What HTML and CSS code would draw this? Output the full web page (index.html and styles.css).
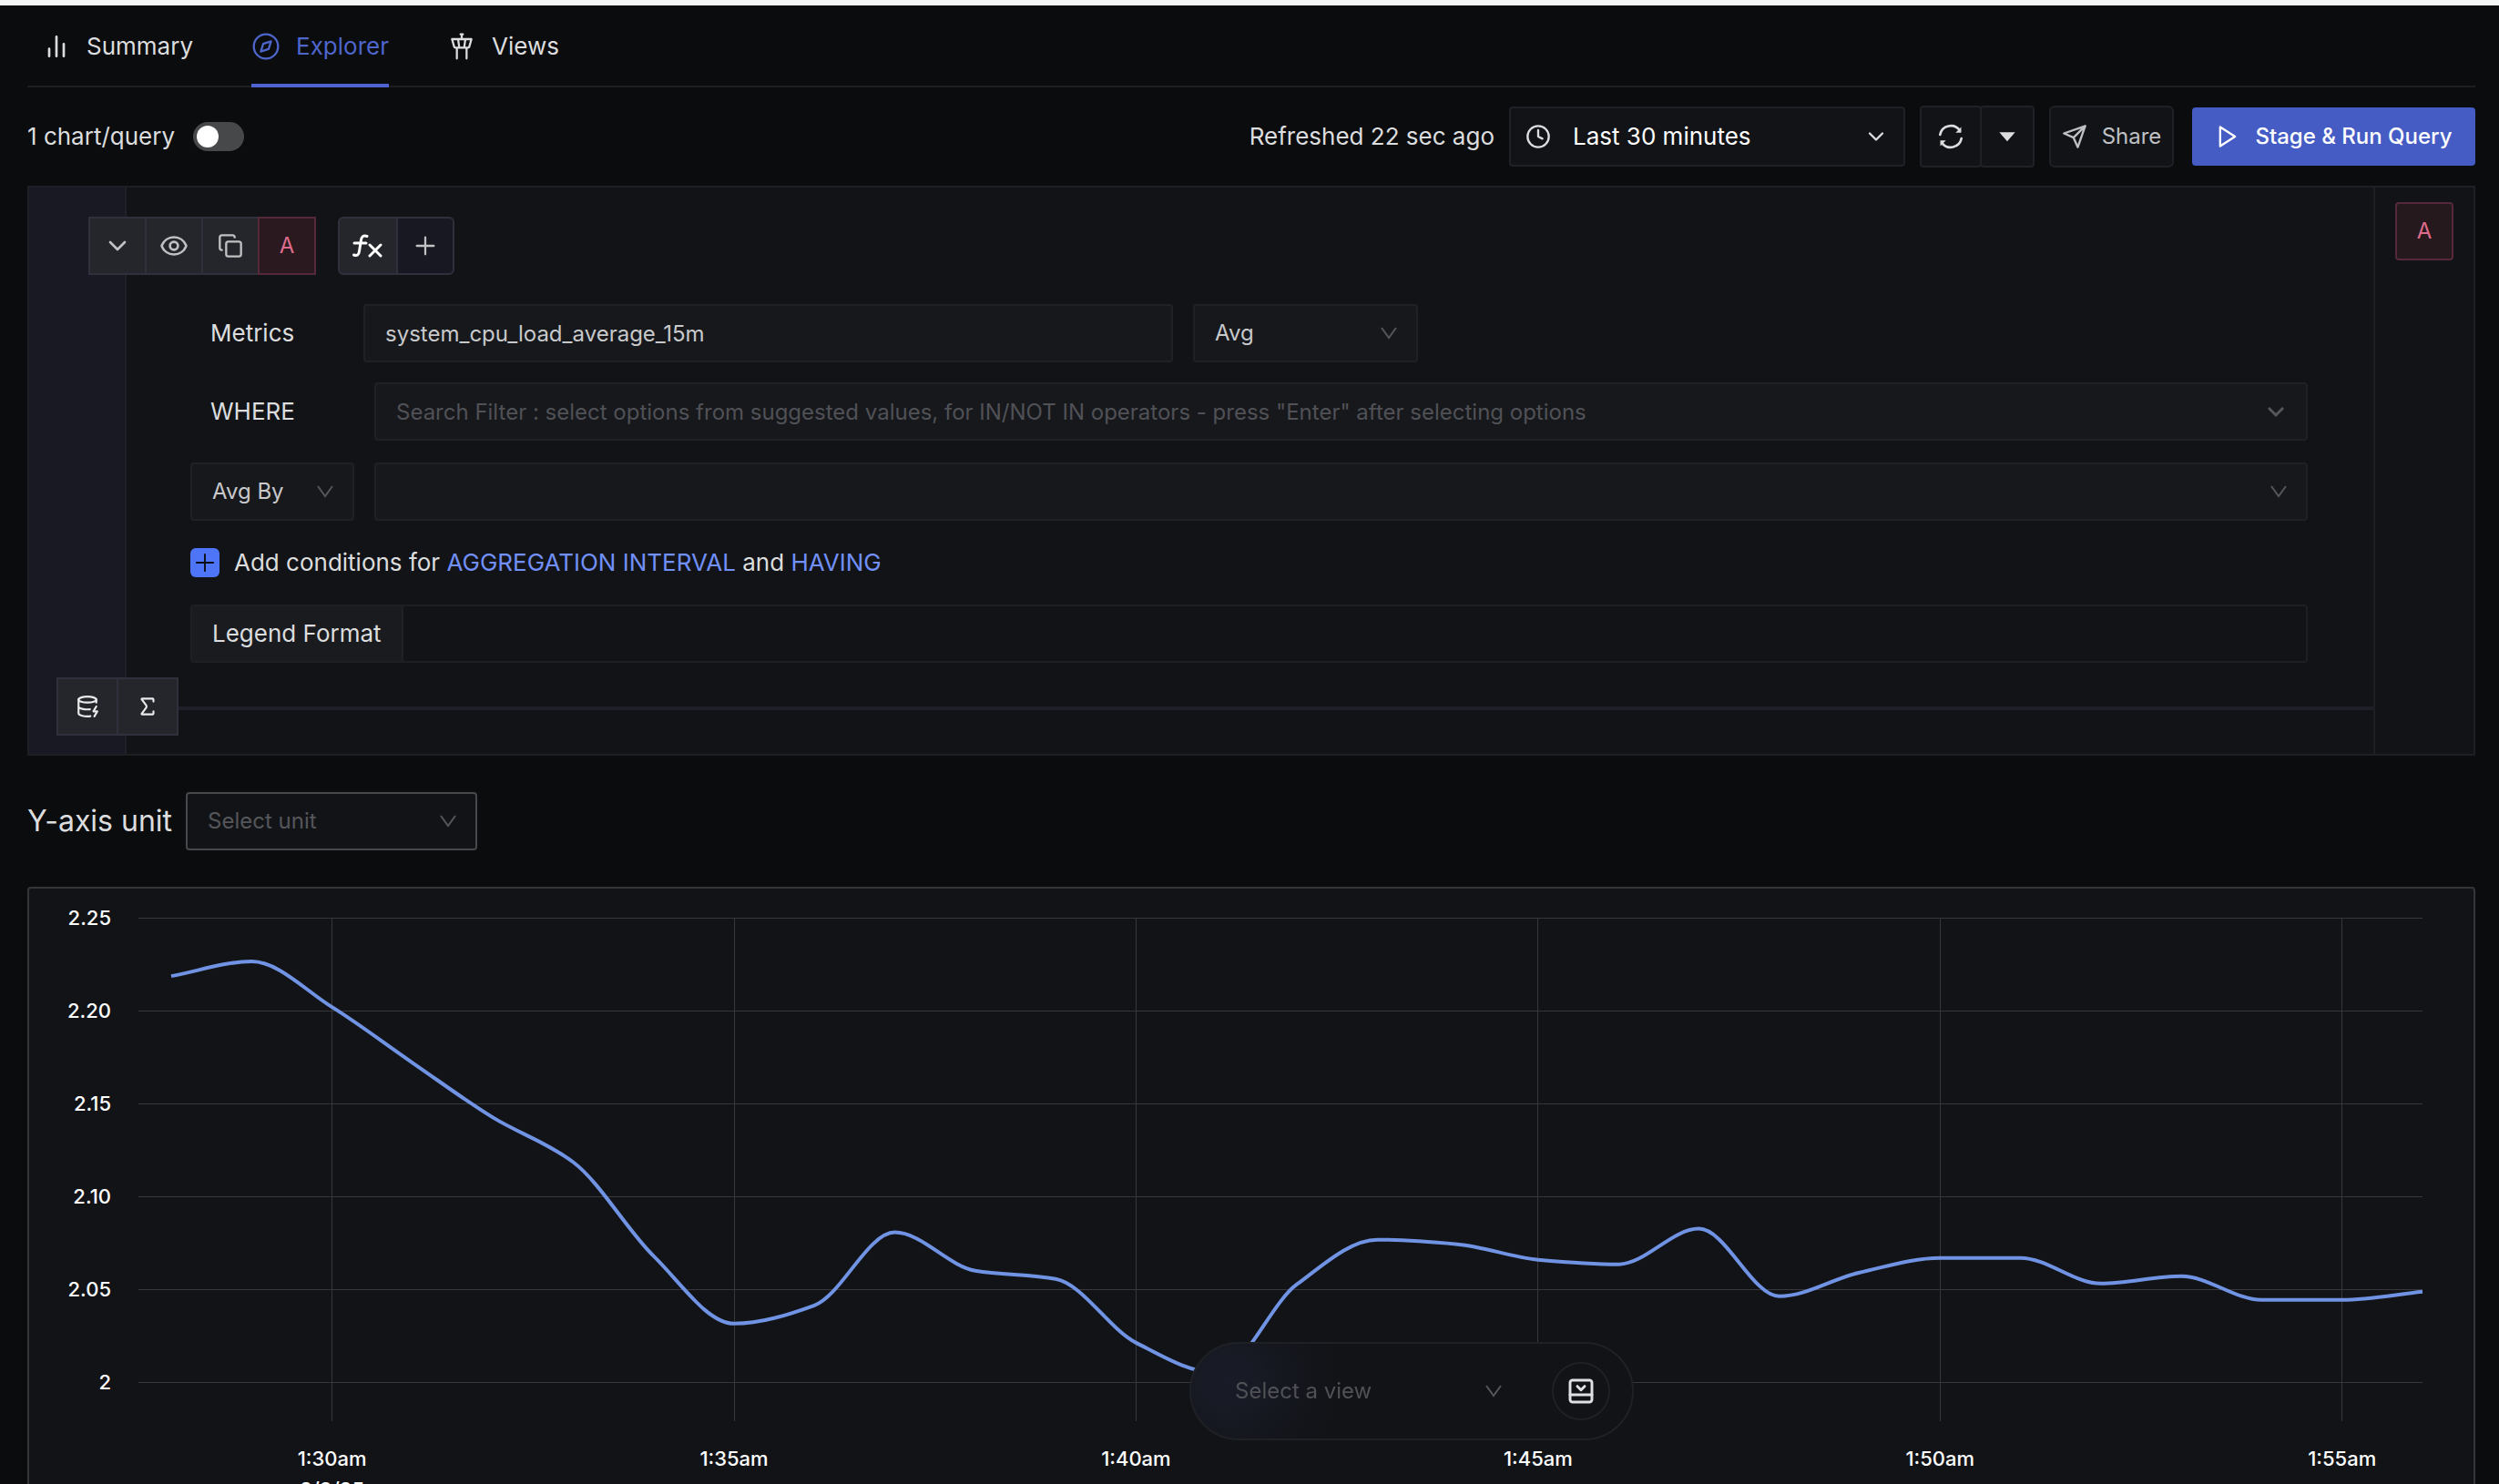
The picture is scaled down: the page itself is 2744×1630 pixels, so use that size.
FILE: index.html
```html
<!DOCTYPE html>
<html lang="en">
<head>
<meta charset="utf-8">
<meta name="viewport" content="width=device-width, initial-scale=1">
<title>Metrics Explorer</title>
<link rel="stylesheet" href="styles.css">
</head>
<body>
<nav class="tabs" aria-label="Metrics sections">
  <a class="tab" href="#summary">
    <svg class="icon icon-lg" viewBox="0 0 24 24"><path d="M18 20V10M12 20V4M6 20v-6"/></svg>
    Summary
  </a>
  <a class="tab tab-active" href="#explorer" aria-current="page">
    <svg class="icon icon-lg icon-thin" viewBox="0 0 24 24"><circle cx="12" cy="12" r="10"/><path d="M16.2 7.8l-2 6.3-6.4 2.1 2-6.3z"/></svg>
    Explorer
  </a>
  <a class="tab" href="#views">
    <svg class="icon icon-lg icon-thin" viewBox="0 0 24 24"><path d="M18.2 12.27 20 6H4l1.8 6.27a1 1 0 0 0 .95.73h10.5a1 1 0 0 0 .96-.73ZM8 13v9M16 22v-9M9 6l1 7M15 6l-1 7M12 6V2M13 2h-2"/></svg>
    Views
  </a>
</nav>

<header class="controls">
  <label class="toggle">1 chart/query <input class="switch" type="checkbox" role="switch"></label>
  <div class="actions">
    <span class="refreshed">Refreshed 22 sec ago</span>
    <button class="btn time-range" type="button">
      <svg class="icon icon-md" viewBox="0 0 24 24"><circle cx="12" cy="12" r="10"/><path d="M12 6v6l4 2"/></svg>
      <span class="time-text">Last 30 minutes</span>
      <svg class="icon icon-md" viewBox="0 0 24 24"><path d="m6 9 6 6 6-6"/></svg>
    </button>
    <div class="refresh-group">
      <button class="btn btn-refresh" type="button" aria-label="Refresh">
        <svg class="icon icon-lg" viewBox="0 0 24 24"><path d="M3.200 10.500a9 9 0 0 1 16.200-3.500M20.800 13.500a9 9 0 0 1-16.200 3.500"/><path class="solid" d="M20.600 4.200v4.600h-4.600zM3.400 19.800v-4.600h4.600z"/></svg>
      </button>
      <button class="btn btn-caret" type="button" aria-label="Auto refresh options">
        <svg class="icon icon-lg" viewBox="0 0 24 24"><path class="solid" d="M5.500 8.500h13L12 16z"/></svg>
      </button>
    </div>
    <button class="btn share" type="button">
      <svg class="icon icon-md" viewBox="0 0 24 24"><path d="m22 2-7 20-4-9-9-4ZM22 2 11 13"/></svg>
      Share
    </button>
    <button class="btn run" type="button">
      <svg class="icon icon-md" viewBox="0 0 24 24"><path d="m5 3 14 9-14 9z"/></svg>
      Stage &amp; Run Query
    </button>
  </div>
</header>

<main>
  <section class="builder" aria-label="Query builder">
    <div class="builder-main">
      <div class="query-toolbar">
        <div class="btn-group">
          <button class="cell" type="button" aria-label="Collapse"><svg class="icon icon-lg" viewBox="0 0 24 24"><path d="m6 9 6 6 6-6"/></svg></button>
          <button class="cell" type="button" aria-label="Toggle visibility"><svg class="icon icon-lg" viewBox="0 0 24 24"><path d="M2 12.300a1 1 0 0 1 0-.6 10.750 10.750 0 0 1 20 0 1 1 0 0 1 0 .6 10.750 10.750 0 0 1-20 0"/><circle cx="12" cy="12" r="3.300"/></svg></button>
          <button class="cell" type="button" aria-label="Duplicate"><svg class="icon icon-md" viewBox="0 0 24 24"><rect x="8" y="8" width="14" height="14" rx="2"/><path d="M4 16c-1.100 0-2-.9-2-2V4c0-1.100.9-2 2-2h10c1.100 0 2 .9 2 2"/></svg></button>
          <button class="cell cell-query" type="button">A</button>
        </div>
        <div class="btn-group btn-group-round">
          <button class="cell cell-fx" type="button" aria-label="Functions"><svg class="icon icon-fx" viewBox="0 0 34 26"><path d="M16 2.500c-4-1.500-6 .5-6.500 4L7.500 19c-.5 4-2.500 5.500-6 4M2 10h13M19 12l12 12M31 12 19 24"/></svg></button>
          <button class="cell cell-add" type="button" aria-label="Add function"><svg class="icon icon-lg icon-thin" viewBox="0 0 24 24"><path d="M5 12h14M12 5v14"/></svg></button>
        </div>
      </div>

      <div class="fields">
        <div class="row">
          <label class="row-label label-metrics" for="metric">Metrics</label>
          <input class="field metric" id="metric" type="text" value="system_cpu_load_average_15m">
          <span class="select-wrap select-agg">
            <select class="field" aria-label="Aggregation"><option>Avg</option></select>
            <svg class="arrow" viewBox="0 0 18 14"><path d="M1 1l8 11 8-11"/></svg>
          </span>
        </div>
        <div class="row row-where">
          <label class="row-label label-where" for="where">WHERE</label>
          <span class="select-wrap grow">
            <input class="field" id="where" type="text" placeholder="Search Filter : select options from suggested values, for IN/NOT IN operators - press &quot;Enter&quot; after selecting options">
            <svg class="arrow arrow-wide" viewBox="0 0 18 14"><path d="M1 3l8 8 8-8"/></svg>
          </span>
        </div>
        <div class="row row-group">
          <span class="select-wrap select-by">
            <select class="field" aria-label="Group function"><option>Avg By</option></select>
            <svg class="arrow" viewBox="0 0 18 14"><path d="M1 1l8 11 8-11"/></svg>
          </span>
          <span class="select-wrap grow">
            <input class="field" type="text" aria-label="Group by attributes">
            <svg class="arrow" viewBox="0 0 18 14"><path d="M1 1l8 11 8-11"/></svg>
          </span>
        </div>
        <div class="conditions">
          <button class="add" type="button" aria-label="Add conditions"><svg class="icon icon-add" viewBox="0 0 24 24"><path d="M2 12h20M12 2v20"/></svg></button>
          <p class="conditions-text">Add conditions for <a href="#interval">AGGREGATION INTERVAL</a> and <a href="#having">HAVING</a></p>
        </div>
        <div class="legend">
          <label class="legend-label" for="legend">Legend Format</label>
          <input class="legend-input" id="legend" type="text">
        </div>
      </div>

      <div class="builder-foot">
        <div class="btn-group">
          <button class="cell cell-foot" type="button" aria-label="Add query"><svg class="icon icon-sm" viewBox="0 0 24 24"><ellipse cx="12" cy="5" rx="9" ry="3"/><path d="M3 5v14a9 3 0 0 0 12 2.840M21 5v3M21 12l-3 5h4l-3 5M3 12a9 3 0 0 0 11.590 2.870"/></svg></button>
          <button class="cell cell-foot" type="button" aria-label="Add formula"><svg class="icon icon-sm" viewBox="0 0 24 24"><path d="M18 7V5a1 1 0 0 0-1-1H6.500a.5.5 0 0 0-.4.8l4.500 6a2 2 0 0 1 0 2.400l-4.500 6a.5.5 0 0 0 .4.8H17a1 1 0 0 0 1-1v-2"/></svg></button>
        </div>
        <div class="foot-line"></div>
      </div>
    </div>
    <aside class="builder-side"><button class="query-chip" type="button">A</button></aside>
  </section>

  <div class="unit">
    <label class="unit-label" for="unit">Y-axis unit</label>
    <span class="select-wrap unit-select">
      <select class="field field-outline" id="unit"><option>Select unit</option></select>
      <svg class="arrow" viewBox="0 0 18 14"><path d="M1 1l8 11 8-11"/></svg>
    </span>
  </div>

  <section class="chart" aria-label="system_cpu_load_average_15m">
    <ul class="y-axis">
      <li>2.25</li><li>2.20</li><li>2.15</li><li>2.10</li><li>2.05</li><li>2</li>
    </ul>
    <div class="plot-area">
      <svg class="plot" id="plot" viewBox="0 0 2508 552" preserveAspectRatio="none">
        <path class="grid" id="grid"/>
        <path class="series" id="series"/>
      </svg>
      <ul class="x-axis" id="x-axis">
        <li>1:30am<br>2/9/25</li><li>1:35am</li><li>1:40am</li><li>1:45am</li><li>1:50am</li><li>1:55am</li>
      </ul>
    </div>
  </section>
</main>

<div class="view-bar">
  <span class="select-wrap view-select">
    <select class="view-field" aria-label="Select a view"><option>Select a view</option></select>
    <svg class="arrow" viewBox="0 0 18 14"><path d="M1 1l8 11 8-11"/></svg>
  </span>
  <button class="save-view" type="button" aria-label="Save this view"><svg class="icon icon-lg icon-bold" viewBox="0 0 24 24"><rect x="3" y="3" width="18" height="18" rx="2"/><path d="M3 15h18M15 8l-3 3-3-3"/></svg></button>
</div>
<script src="chart.js"></script>
</body>
</html>
```
FILE: styles.css
```css
* {
  box-sizing: border-box;
}

body {
  margin: 0;
  height: 100vh;
  overflow: hidden;
  border-top: 6px solid #f4f6f5;
  background: #0b0c0e;
  color: #dcddde;
  font: 400 26px/32px Inter, "Liberation Sans", sans-serif;
}

button,
input,
select {
  margin: 0;
  font: inherit;
  color: inherit;
}

a {
  color: inherit;
  text-decoration: none;
}

ul {
  margin: 0;
  padding: 0;
  list-style: none;
}

/* Icons */
.icon {
  flex: none;
  display: block;
  fill: none;
  stroke: currentColor;
  stroke-width: 2;
  stroke-linecap: round;
  stroke-linejoin: round;
}

.icon-sm { width: 26px; height: 26px; }
.icon-md { width: 28px; height: 28px; }
.icon-lg { width: 32px; height: 32px; }
.icon-fx { width: 34px; height: 26px; stroke-width: 3; }
.icon-add { width: 22px; height: 22px; }
.icon-thin { stroke-width: 1.7; }
.icon-bold { stroke-width: 2.2; }

.solid {
  fill: currentColor;
  stroke: none;
}

/* Tabs */
.tabs {
  display: flex;
  gap: 64px;
  height: 90px;
  margin: 0 26px 0 30px;
  padding-left: 16px;
  border-bottom: 2px solid #1d1e22;
}

.tab {
  display: flex;
  align-items: center;
  gap: 17px;
  margin-bottom: -2px;
  padding-top: 4px;
  border-bottom: 4px solid transparent;
}

.tab-active {
  border-color: #4e63cf;
  color: #4e66cc;
}

/* Controls */
.controls {
  display: flex;
  align-items: center;
  justify-content: space-between;
  padding: 20px 26px 20px 30px;
}

.toggle {
  display: flex;
  align-items: center;
  gap: 20px;
}

.switch {
  appearance: none;
  width: 56px;
  height: 32px;
  padding: 4px;
  border-radius: 16px;
  background: #47484a;
}

.switch::before {
  content: "";
  display: block;
  width: 24px;
  height: 24px;
  border-radius: 50%;
  background: #fff;
}

.actions {
  display: flex;
  align-items: center;
  gap: 16px;
}

.btn {
  display: flex;
  align-items: center;
  justify-content: center;
  height: 68px;
  padding: 0;
  border: 2px solid #1f2126;
  border-radius: 4px;
  background: #121317;
}

.time-range {
  width: 435px;
  height: 66px;
  padding: 0 16px;
  gap: 24px;
}

.time-text {
  flex: 1;
  text-align: left;
  color: #fff;
}

.refresh-group {
  display: flex;
}

.btn-refresh {
  width: 68px;
}

.btn-caret {
  width: 60px;
  margin-left: -2px;
}

.share {
  gap: 16px;
  width: 137px;
  border-radius: 6px;
  color: #bfc0c3;
  font-size: 24px;
}

.run {
  gap: 16px;
  width: 311px;
  height: 64px;
  margin-left: 4px;
  border: 0;
  background: #445cc4;
  color: #fff;
  font-size: 24px;
  font-weight: 500;
}

/* Query builder */
.builder {
  position: relative;
  display: flex;
  margin: 0 26px 0 30px;
  border: 2px solid #1d1f24;
  background: #121317;
}

.builder::before {
  content: "";
  position: absolute;
  inset: 0 auto 0 0;
  width: 105px;
  border-right: 2px solid #1f2129;
  background: #181922;
}

.builder-main {
  position: relative;
  flex: 1;
  padding: 32px 0 20px;
}

.builder-side {
  width: 110px;
  padding: 16px 22px;
  border-left: 2px solid #1d1f24;
}

.query-chip {
  width: 64px;
  height: 64px;
  padding: 0;
  border: 2px solid #55283a;
  border-radius: 4px;
  background: #26191d;
  color: #dd6c8c;
  font-size: 24px;
}

.query-toolbar {
  display: flex;
  gap: 24px;
  padding-left: 65px;
}

.btn-group {
  display: flex;
}

.cell {
  display: grid;
  place-items: center;
  width: 64px;
  height: 64px;
  padding: 0;
  border: 2px solid #2e303b;
  background: #24262b;
  color: #c0c1c3;
  font-size: 24px;
}

.cell + .cell {
  margin-left: -2px;
}

.cell-query {
  border-color: #55283a;
  background: #2a1a1f;
  color: #dd6c8c;
}

.btn-group-round .cell:first-child {
  width: 66px;
  border-radius: 6px 0 0 6px;
}

.btn-group-round .cell:last-child {
  border-radius: 0 6px 6px 0;
}

.cell-fx {
  color: #fff;
}

.cell-add {
  background: #171822;
}

.fields {
  display: flex;
  flex-direction: column;
  padding: 32px 72px 16px 177px;
}

.row {
  display: flex;
  align-items: center;
}

.row-where {
  margin-top: 22px;
}

.row-group {
  margin-top: 24px;
  gap: 22px;
}

.row-label {
  padding-left: 22px;
}

.label-metrics {
  width: 190px;
}

.label-where {
  width: 202px;
}

.field {
  display: block;
  appearance: none;
  width: 100%;
  height: 64px;
  padding: 0 22px;
  border: 2px solid #1f2126;
  border-radius: 4px;
  outline: 0;
  background: #17181c;
  color: #c8c9cb;
  font-size: 24px;
}

.field::placeholder {
  color: #505156;
  opacity: 1;
}

.metric {
  width: 889px;
  margin-right: 22px;
}

.select-wrap {
  position: relative;
  display: block;
}

.grow {
  flex: 1;
}

.select-agg {
  width: 247px;
}

.select-by {
  width: 180px;
}

.arrow {
  position: absolute;
  top: 50%;
  right: 23px;
  width: 18px;
  height: 14px;
  margin-top: -7px;
  fill: none;
  stroke: #55565b;
  stroke-width: 2;
  pointer-events: none;
}

.arrow-wide {
  right: 26px;
  stroke-width: 3;
}

.conditions {
  display: flex;
  align-items: center;
  gap: 16px;
  margin: 30px 0;
}

.add {
  display: grid;
  place-items: center;
  width: 32px;
  height: 32px;
  padding: 0;
  border: 0;
  border-radius: 6px;
  background: #4e74f8;
  color: #0b0c0e;
}

.conditions-text {
  margin: 0;
}

.conditions-text a {
  color: #7190f9;
}

.legend {
  display: flex;
  height: 64px;
  border: 2px solid #1d1f24;
  border-radius: 4px;
}

.legend-label {
  display: flex;
  align-items: center;
  width: 232px;
  padding-left: 22px;
  border-right: 2px solid #1f2126;
  background: #1a1b1f;
}

.legend-input {
  flex: 1;
  min-width: 0;
  padding: 0 22px;
  border: 0;
  outline: 0;
  background: transparent;
}

.builder-foot {
  display: flex;
  align-items: center;
  padding-left: 30px;
}

.cell-foot {
  width: 68px;
  color: #e8e9ea;
}

.foot-line {
  flex: 1;
  height: 4px;
  margin-top: 4px;
  background: #1e1f29;
}

/* Unit */
.unit {
  display: flex;
  align-items: center;
  gap: 15px;
  margin: 40px 30px;
}

.unit-label {
  font-size: 32px;
}

.unit-select {
  width: 320px;
}

.field-outline {
  border-color: #47484c;
  background: #121317;
  color: #55565a;
}

/* Chart */
.chart {
  display: flex;
  height: 720px;
  margin: 0 26px 0 30px;
  padding: 32px 56px 0 0;
  border: 2px solid #35363a;
  border-radius: 4px;
  background: #121317;
  color: #fff;
  font-size: 22px;
  font-weight: 500;
}

.y-axis {
  width: 120px;
  margin-top: -51px;
  padding-right: 30px;
  line-height: 102px;
  text-align: right;
}

.plot-area {
  flex: 1;
}

.plot {
  display: block;
  width: 100%;
  height: 553px;
  overflow: visible;
}

.grid,
.series {
  fill: none;
  vector-effect: non-scaling-stroke;
}

.grid {
  stroke: #fff;
  stroke-opacity: 0.16;
  stroke-width: 1;
  shape-rendering: crispEdges;
}

.series {
  stroke: #7193e4;
  stroke-width: 4;
}

.x-axis {
  position: relative;
  line-height: 34px;
  text-align: center;
}

.x-axis li {
  position: absolute;
  top: 24px;
  transform: translateX(-50%);
}

/* Floating view bar */
.view-bar {
  position: fixed;
  bottom: 48px;
  left: calc(50% + 178px);
  display: flex;
  align-items: center;
  justify-content: space-between;
  width: 488px;
  height: 108px;
  padding: 0 24px;
  border: 2px solid #1f2126;
  border-radius: 54px;
  background: radial-gradient(circle at 40px 40px, #191c28, #121317 120px);
  transform: translateX(-50%);
}

.view-select {
  width: 340px;
}

.view-field {
  appearance: none;
  width: 100%;
  height: 64px;
  padding: 0 24px;
  border: 0;
  outline: 0;
  background: transparent;
  color: #505156;
  font-size: 24px;
}

.save-view {
  display: grid;
  place-items: center;
  width: 64px;
  height: 64px;
  padding: 0;
  border: 2px solid #1f2126;
  border-radius: 50%;
  background: #121317;
  color: #e0e1e3;
}
```
FILE: chart.js
```js
// One sample per minute; x and y are in the plot's own 2508 x 552 units.
const FIRST_X = 36;
const STEP = 2472 / 28;
const samples = [
  64, 48, 98, 159, 219, 268, 371, 445, 425, 345, 387, 396, 466, 499, 402,
  353, 358, 375, 380, 341, 415, 389, 373, 373, 401, 393, 419, 419, 410
];

// Monotone cubic interpolation through the samples.
function monotonePath(ys) {
  const slopes = ys.slice(1).map((y, i) => y - ys[i]);
  const tangents = ys.map((_, i) => {
    if (i === 0) return slopes[0];
    if (i === ys.length - 1) return slopes[i - 1];
    const a = slopes[i - 1];
    const b = slopes[i];
    return a * b <= 0 ? 0 : (2 * a * b) / (a + b);
  });
  let d = `M${FIRST_X} ${ys[0]}`;
  for (let i = 0; i < slopes.length; i++) {
    const x = FIRST_X + i * STEP;
    d += `C${x + STEP / 3} ${ys[i] + tangents[i] / 3}`
      + ` ${x + (2 * STEP) / 3} ${ys[i + 1] - tangents[i + 1] / 3}`
      + ` ${x + STEP} ${ys[i + 1]}`;
  }
  return d;
}

const ticksX = [2, 7, 12, 17, 22, 27].map(i => FIRST_X + i * STEP);
let grid = "";
for (let i = 0; i < 6; i++) grid += `M0 ${i * 102}H2508`;
for (const x of ticksX) grid += `M${x} 0V552`;

document.getElementById("grid").setAttribute("d", grid);
document.getElementById("series").setAttribute("d", monotonePath(samples));
document.querySelectorAll("#x-axis li").forEach((li, i) => {
  li.style.left = `${(ticksX[i] / 2508) * 100}%`;
});
```
